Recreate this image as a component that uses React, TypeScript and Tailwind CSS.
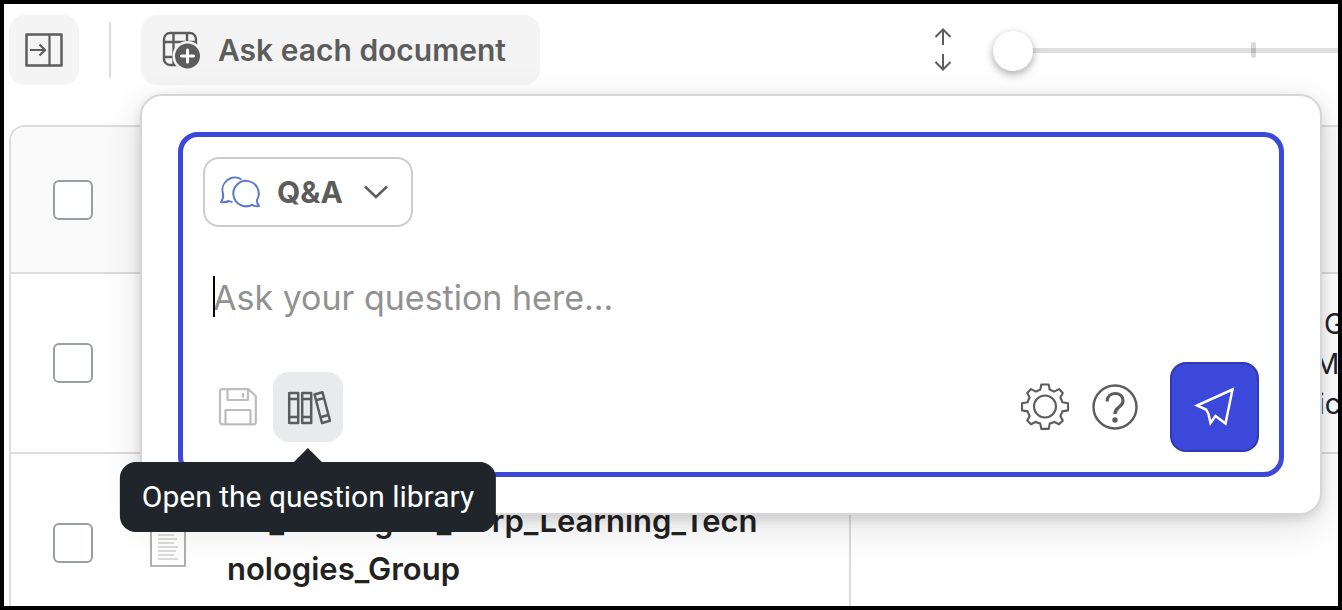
import React, { useState } from "react";

const PanelIcon = () => (
  <svg width="40" height="40" viewBox="0 0 40 40" fill="none" stroke="currentColor" strokeWidth="2.5" strokeLinejoin="round">
    <rect x="2.5" y="4.5" width="35" height="31" />
    <path d="M25.5 4.5v31" strokeWidth="2.2" />
    <path d="M6 20h14.5M15.5 14.5l5.5 5.5-5.5 5.5" strokeWidth="2.2" />
  </svg>
);

const TableAddIcon = () => (
  <svg width="40" height="40" viewBox="0 0 40 40" fill="none" stroke="currentColor" strokeWidth="2.4">
    <rect x="3" y="3" width="32" height="32" rx="6" />
    <path d="M12.5 3v32M26 3v32M3 12h32M3 27h32" />
    <circle cx="26.5" cy="26" r="15" fill="#f4f4f4" stroke="none" />
    <circle cx="26.5" cy="26" r="12.5" fill="currentColor" stroke="none" />
    <path d="M26.5 20v12M20.5 26h12" stroke="white" strokeWidth="3" strokeLinecap="round" />
  </svg>
);

const UpDownIcon = () => (
  <svg width="20" height="44" viewBox="0 0 20 44" fill="none" stroke="currentColor" strokeWidth="2">
    <path d="M10 17V2M2.5 9L10 1.5 17.5 9" />
    <path d="M10 26v15M2.5 34l7.5 7.5 7.5-7.5" />
  </svg>
);

const ChatIcon = () => (
  <svg width="42" height="36" viewBox="0 0 42 36" fill="none" stroke="#5b78cf" strokeWidth="2" strokeLinejoin="round">
    <path d="M22.5 5.500A12.500 12.500 0 0 0 4 20c.6 3-.2 5.500-2 8 3 .6 5.600.2 8-1 1.200.7 2.200 1 3.500 1" />
    <path d="M38 26A12.700 12.700 0 1 0 33 30.800c2.300 1.300 4.300 1.700 7 1.300-1.500-2-2.200-4-2-6.100z" />
  </svg>
);

const ChevronIcon = () => (
  <svg width="26" height="16" viewBox="0 0 26 16" fill="none" stroke="currentColor" strokeWidth="2.500">
    <path d="M2 2.500l11 10.500 11-10.500" />
  </svg>
);

const SaveIcon = () => (
  <svg width="40" height="40" viewBox="0 0 40 40" fill="none" stroke="currentColor" strokeWidth="2.2" strokeLinejoin="round">
    <path d="M3.500 2.200h27l7.300 7v26a2.200 2.200 0 0 1-2.200 2.200H4.200a2.200 2.200 0 0 1-2.200-2.200V4a1.800 1.800 0 0 1 1.500-1.800z" />
    <path d="M9.500 2.200V13h20.500V2.200M25 6v4.500M7.500 37.400V23h25v14.400" />
  </svg>
);

const BooksIcon = () => (
  <svg width="46" height="36" viewBox="0 0 46 36" fill="none" stroke="currentColor" strokeWidth="2.500" strokeLinejoin="round">
    <rect x="4.200" y="4" width="9" height="30" />
    <path d="M4.200 10h9M4.200 28h9" />
    <rect x="17.200" y="4" width="9" height="30" />
    <path d="M17.200 10h9M17.200 28h9" />
    <path d="M29.500 5.500l8-2.200 7.500 28.500-8 2.200zM31 11.300l8-2.200M35.500 28.200l8-2.200" />
  </svg>
);

const GearIcon = () => (
  <svg width="50" height="50" viewBox="0 0 50 50" fill="none" stroke="currentColor" strokeWidth="2.100" strokeLinejoin="round">
    <path d="M21.300 2.500h7.400l1 5.300q2.200.5 4.300 1.800l5-2.500 3.800 3.800-2.500 4.500q1.400 2.200 2 4.800l5.700 1v7.200l-5.700 1q-.6 2.400-2 4.600l2.500 4.500-3.800 3.800-5-2.500q-2.100 1.300-4.300 1.800l-1 5.300h-7.400l-1-5.300q-2.200-.5-4.300-1.800l-5 2.500-3.800-3.800 2.500-4.500q-1.400-2.200-2-4.600l-5.700-1v-7.200l5.700-1q.6-2.600 2-4.800l-2.500-4.500 3.800-3.800 5 2.500q2.100-1.300 4.300-1.800z" />
    <circle cx="25" cy="24.500" r="11" />
  </svg>
);

const HelpIcon = () => (
  <svg width="48" height="48" viewBox="0 0 48 48" fill="none" stroke="currentColor">
    <circle cx="24" cy="24" r="21.500" strokeWidth="2.400" />
    <path d="M16.200 18.500c0-5 3.300-8 7.900-8s7.900 2.900 7.900 7.200c0 3.800-2.200 5.200-4.500 6.900-2.500 1.800-3.500 3-3.500 6.400" strokeWidth="3.200" />
    <circle cx="24" cy="37" r="2.700" fill="currentColor" stroke="none" />
  </svg>
);

const SendIcon = () => (
  <svg width="42" height="42" viewBox="0 0 42 42" fill="none" stroke="currentColor" strokeWidth="2.500">
    <path d="M38.500 3.500L3 19.500l9 4 2.500 4.500 2 9 5-7 10 7.500z" />
  </svg>
);

const DocIcon = () => (
  <svg width="36" height="46" viewBox="0 0 36 46" fill="none" className="shrink-0">
    <path d="M1 1h25l9 9v35H1z" fill="white" stroke="#9d9d9d" strokeWidth="1.600" />
    <path d="M8 14h16M8 18h19M8 22h16M8 26h20M8 30h18M8 34h16M8 38h20" stroke="#d0d0d0" strokeWidth="1.400" />
  </svg>
);

const checkboxClass =
  "block w-10 h-10 mx-auto bg-white border-2 border-[#999ea3] rounded-md appearance-none checked:bg-[#3b48d9]";
const iconButton = "flex items-center justify-center w-[70px] h-[70px] rounded-2xl";

const App = () => {
  const [question, setQuestion] = useState("");
  const [height, setHeight] = useState(0);

  return (
    <div className="relative h-screen overflow-hidden bg-white border-4 border-black font-['Inter',sans-serif] text-[#5c5c5c]">
      <header className="flex items-center pl-[5px] pt-[11px]">
        <button type="button" aria-label="Expand panel" className={`${iconButton} bg-[#f4f4f4]`}>
          <PanelIcon />
        </button>
        <div className="w-0.5 h-14 mx-[30px] bg-[#dcdcdc]"></div>
        <button type="button" className="flex items-center gap-[17px] h-[70px] pl-5 pr-[34px] rounded-2xl bg-[#f4f4f4] text-3xl font-semibold whitespace-nowrap">
          <TableAddIcon />
          Ask each document
        </button>

        <div className="flex items-center ml-auto shrink-0">
          <UpDownIcon />
          <div className="relative flex items-center w-[345px] ml-10">
            <input
              type="range"
              aria-label="Row height"
              min={0}
              max={2}
              value={height}
              onChange={(e) => setHeight(Number(e.target.value))}
              className="w-[500px] shrink-0 h-10 bg-transparent appearance-none [&::-webkit-slider-runnable-track]:h-[5px] [&::-webkit-slider-runnable-track]:bg-[#dfdfdf] [&::-webkit-slider-thumb]:appearance-none [&::-webkit-slider-thumb]:w-10 [&::-webkit-slider-thumb]:h-10 [&::-webkit-slider-thumb]:-mt-[17px] [&::-webkit-slider-thumb]:rounded-full [&::-webkit-slider-thumb]:bg-white [&::-webkit-slider-thumb]:shadow-[0_3px_9px_rgba(0,0,0,0.35)]"
            />
            <span className="absolute left-[258px] w-[5px] h-4 rounded-sm bg-black/15"></span>
          </div>
        </div>
      </header>

      <main className="mt-10 ml-[5px] overflow-hidden border-t-2 border-l-2 border-[#dcdcdc] rounded-tl-2xl">
        <table className="w-full border-separate table-fixed border-spacing-0">
          <thead>
            <tr className="h-[147px] bg-[#fafafa]">
              <th className="w-[123px] border-b-2 border-[#dcdcdc] p-0">
                <input type="checkbox" aria-label="Select all documents" className={checkboxClass} />
              </th>
              <th className="w-[717px] border-b-2 border-r-2 border-[#dcdcdc] p-0"></th>
              <th className="border-b-2 border-[#dcdcdc] p-0"></th>
            </tr>
          </thead>
          <tbody>
            <tr className="h-[180px]">
              <td className="border-b-2 border-[#dcdcdc] p-0">
                <input type="checkbox" aria-label="Select document 1" className={checkboxClass} />
              </td>
              <td className="border-b-2 border-r-2 border-[#dcdcdc] p-0"></td>
              <td className="border-b-2 border-[#dcdcdc] p-0">
                <div className="w-7 pt-0.5 ml-auto -mr-1 text-[28px] leading-10 text-[#20252c] whitespace-nowrap">
                  <p className="pl-2.5">G</p>
                  <p>M</p>
                  <p className="pl-1">ic</p>
                </div>
              </td>
            </tr>
            <tr className="h-[180px]">
              <td className="pt-0 pb-0.5 px-0">
                <input type="checkbox" aria-label="Select document 2" className={checkboxClass} />
              </td>
              <td className="border-r-2 border-[#dcdcdc] py-0 pl-4 pr-0">
                <div className="flex items-center gap-[41px]">
                  <DocIcon />
                  <p className="pt-0.5 text-[31px] leading-[48px] font-semibold text-[#222]">
                    for_Strategies_Corp_Learning_Tech
                    <br />
                    nologies_Group
                  </p>
                </div>
              </td>
              <td className="p-0"></td>
            </tr>
          </tbody>
        </table>
      </main>

      <section className="absolute left-[136px] right-4 top-[90px] p-9 bg-white border-2 border-[#d6d6d6] rounded-[22px] shadow-[0_4px_12px_rgba(0,0,0,0.12),0_12px_40px_rgba(0,0,0,0.12)]">
        <form className="p-5 border-5 border-[#3b48d9] rounded-[20px]" onSubmit={(e) => e.preventDefault()}>
          <button type="button" className="flex items-center h-[70px] pl-3.5 pr-[22px] border-2 border-[#cbcbcb] rounded-2xl text-3xl font-bold">
            <ChatIcon />
            <span className="ml-4 mr-5">Q&amp;A</span>
            <ChevronIcon />
          </button>

          <div className="relative px-2.5">
            <textarea
              aria-label="Question"
              value={question}
              onChange={(e) => setQuestion(e.target.value)}
              placeholder="Ask your question here..."
              className="block w-full h-[135px] pt-[51px] text-[34px] leading-10 resize-none text-[#20252c] placeholder:text-[#919191] focus:outline-none"
            />
            {question === "" && <span className="absolute left-2.5 top-[49px] w-0.5 h-[41px] bg-black"></span>}
          </div>

          <div className="flex items-center">
            <button type="button" aria-label="Save question" className={`${iconButton} text-[#bdbdbd]`}>
              <SaveIcon />
            </button>
            <div className="relative">
              <button type="button" aria-label="Question library" className={`${iconButton} bg-[#e9eaec]`}>
                <BooksIcon />
              </button>
              <div
                role="tooltip"
                className="absolute top-full left-1/2 -translate-x-1/2 mt-5 px-[22px] rounded-2xl bg-[#20252c] text-white text-[30px] leading-[70px] font-['Roboto',sans-serif] whitespace-nowrap"
              >
                <svg width="30" height="16" viewBox="0 0 30 16" className="absolute left-1/2 bottom-full -translate-x-1/2 translate-y-px">
                  <path d="M0 16L15 1l15 15z" fill="#20252c" />
                </svg>
                Open the question library
              </div>
            </div>
            <button type="button" aria-label="Settings" className={`${iconButton} ml-auto`}>
              <GearIcon />
            </button>
            <button type="button" aria-label="Help" className={iconButton}>
              <HelpIcon />
            </button>
            <button type="submit" aria-label="Send" className="flex items-center justify-center w-[89px] h-[90px] ml-5 border-2 border-[#2f3ab0] rounded-2xl bg-[#3b48d9] text-white">
              <SendIcon />
            </button>
          </div>
        </form>
      </section>
    </div>
  );
};

export default App;
